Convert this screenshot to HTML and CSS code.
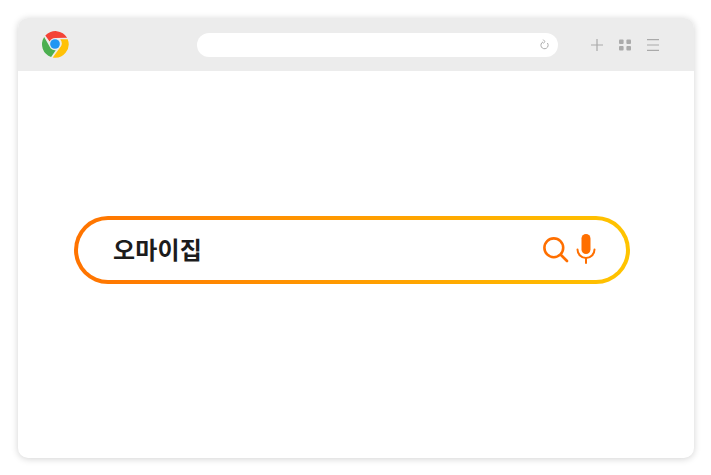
FILE: index.html
```html
<!DOCTYPE html>
<html lang="ko">
<head>
    <meta charset="UTF-8">
    <meta name="viewport" content="width=device-width, initial-scale=1.0">
    <title>오마이집</title>
    <link rel="stylesheet" href="styles.css">
</head>
<body>
    <div class="window">
        <div class="toolbar">
            <svg class="logo" width="28" height="28" viewBox="0 0 30 30">
                <path d="M4.6 6A14.5 14.5 0 0 1 28 8.4L15.2 8.6A6.6 6.6 0 0 0 9.2 12.4Z" fill="#f44336"/>
                <path d="M3.4 7.4L10.4 19.8A6.8 6.8 0 0 0 15.8 21.6L10.8 29A14.5 14.5 0 0 1 3.4 7.4Z" fill="#4caf50"/>
                <path d="M28.6 9.8A14.5 14.5 0 0 1 12.6 29.4L19.8 19.6A6.6 6.6 0 0 0 20.6 10Z" fill="#ffc107"/>
                <circle cx="15" cy="15" r="5.2" fill="#2196f3"/>
            </svg>
            <div class="address">
                <svg width="10" height="11" viewBox="0 0 10 11" fill="none" stroke="#aaa" stroke-width="1">
                    <path d="M7.4 4A3.6 3.6 0 1 1 3 2.9"/>
                    <path d="M3.2 .6L5 2.6L3.2 4.4"/>
                </svg>
            </div>
            <div class="actions">
                <svg width="12" height="12" viewBox="0 0 12 12" stroke="#aaa" stroke-width="1.2">
                    <path d="M6 0V12M0 6H12"/>
                </svg>
                <svg width="12" height="12" viewBox="0 0 12 12" fill="#aaa">
                    <rect x="0" y="0.5" width="4.6" height="4.5" rx="1"/>
                    <rect x="7.4" y="0.5" width="4.6" height="4.5" rx="1"/>
                    <rect x="0" y="7" width="4.6" height="4.5" rx="1"/>
                    <rect x="7.4" y="7" width="4.6" height="4.5" rx="1"/>
                </svg>
                <svg width="12" height="12" viewBox="0 0 12 12" stroke="#aaa" stroke-width="1.2">
                    <path d="M0 .6H12M0 6H12M0 11.4H12"/>
                </svg>
            </div>
        </div>
        <div class="content">
            <div class="search">
                <span class="query">오마이집</span>
                <svg class="search-icon" width="26" height="26" viewBox="0 0 26 26" fill="none" stroke="#ff6f00" stroke-width="2.6" stroke-linecap="round">
                    <circle cx="10.8" cy="10.8" r="9.4"/>
                    <path d="M18 18L24 24"/>
                </svg>
                <svg class="mic-icon" width="20" height="30" viewBox="0 0 20 30" fill="none" stroke="#ff6f00" stroke-width="2" stroke-linecap="round">
                    <rect x="5.5" y="0" width="9" height="20" rx="4.5" fill="#ff6f00" stroke="none"/>
                    <path d="M1.5 15.5A8.5 8.5 0 0 0 18.5 15.5"/>
                    <path d="M10 24V29"/>
                </svg>
            </div>
        </div>
    </div>
</body>
</html>
```

FILE: styles.css
```css
* {
    box-sizing: border-box;
}

html, body {
    height: 100%;
}

body {
    margin: 0;
    padding: 18px 17px 17px 18px;
    background-color: #fff;
    font-family: "Noto Sans CJK KR", "Noto Sans", sans-serif;
}

.window {
    display: flex;
    flex-direction: column;
    height: 100%;
    background-color: #fff;
    border-radius: 10px;
    box-shadow: 0 1px 7px rgba(0, 0, 0, 0.18);
    overflow: hidden;
}

.toolbar {
    display: flex;
    align-items: center;
    height: 53px;
    padding-left: 23px;
    background-color: #ececec;
}

.logo {
    flex: none;
    margin-top: -1px;
}

.address {
    display: flex;
    align-items: center;
    justify-content: flex-end;
    width: 361px;
    height: 24px;
    margin-left: 128px;
    padding-right: 8px;
    background-color: #fff;
    border-radius: 12px;
}

.actions {
    display: flex;
    align-items: center;
    gap: 16px;
    margin-left: 33px;
}

.content {
    flex: 1;
    display: flex;
    align-items: center;
    padding: 0 64px 29px 56px;
}

.search {
    display: flex;
    align-items: center;
    width: 100%;
    height: 68px;
    padding: 0 30px 0 35px;
    border: 4px solid transparent;
    border-radius: 34px;
    background: linear-gradient(#fff, #fff) padding-box,
                linear-gradient(90deg, #ff7300, #ffc400) border-box;
}

.query {
    flex: 1;
    font-size: 24px;
    font-weight: 700;
    letter-spacing: 0.2px;
    color: #1c1c1c;
    margin-top: -3px;
}

.search-icon {
    flex: none;
}

.mic-icon {
    flex: none;
    margin-left: 7px;
    margin-top: -3px;
}
```
